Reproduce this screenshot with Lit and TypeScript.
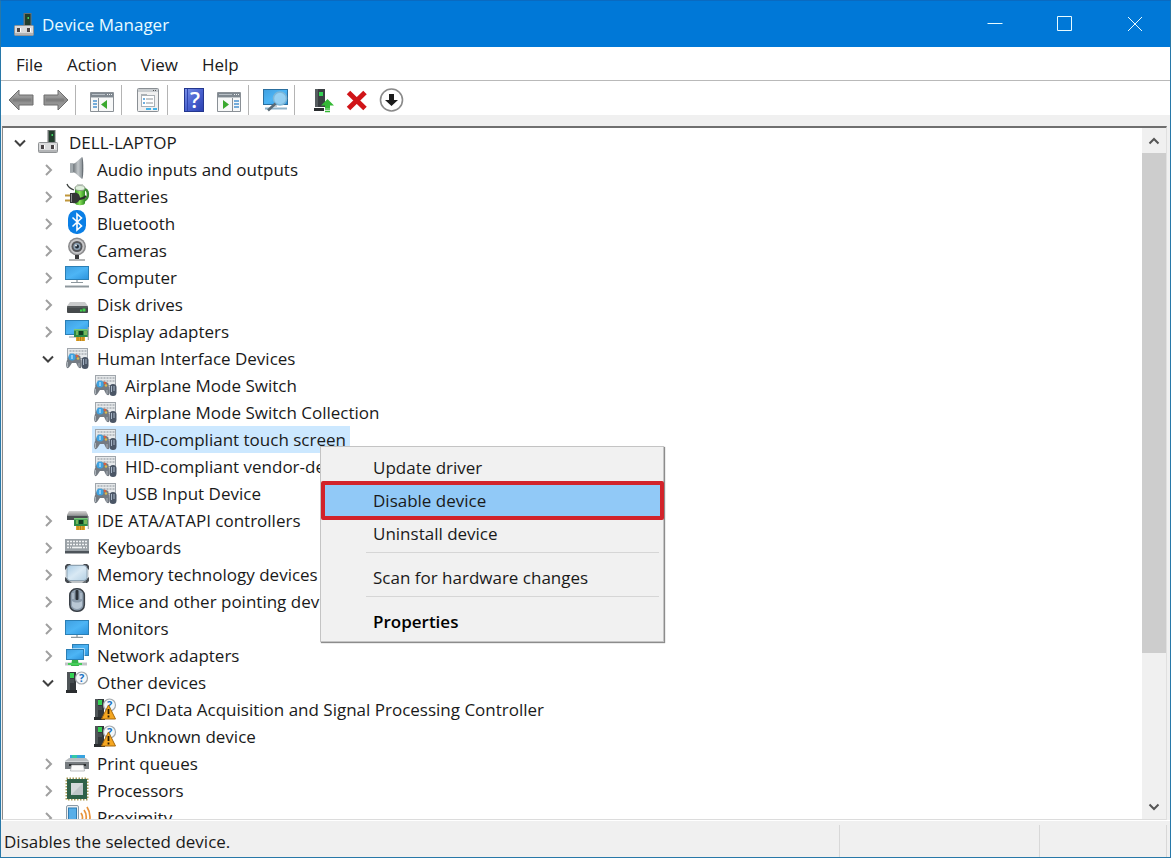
import { LitElement, html, svg, css, SVGTemplateResult } from "lit";
import { customElement, state } from "lit/decorators.js";
import { classMap } from "lit/directives/class-map.js";

interface Device {
  label: string;
  icon: string;
  level: number;
  open?: boolean;
}

const leaf = (label: string, icon: string): Device => ({ label, icon, level: 2 });
const group = (label: string, icon: string, open = false): Device => ({ label, icon, level: 1, open });

const DEVICES: Device[] = [
  { label: "DELL-LAPTOP", icon: "root", level: 0, open: true },
  group("Audio inputs and outputs", "audio"),
  group("Batteries", "battery"),
  group("Bluetooth", "bluetooth"),
  group("Cameras", "camera"),
  group("Computer", "computer"),
  group("Disk drives", "disk"),
  group("Display adapters", "display"),
  group("Human Interface Devices", "hid", true),
  leaf("Airplane Mode Switch", "hid"),
  leaf("Airplane Mode Switch Collection", "hid"),
  leaf("HID-compliant touch screen", "hid"),
  leaf("HID-compliant vendor-defined device", "hid"),
  leaf("USB Input Device", "hid"),
  group("IDE ATA/ATAPI controllers", "ide"),
  group("Keyboards", "keyboard"),
  group("Memory technology devices", "memory"),
  group("Mice and other pointing devices", "mouse"),
  group("Monitors", "monitor"),
  group("Network adapters", "network"),
  group("Other devices", "other", true),
  leaf("PCI Data Acquisition and Signal Processing Controller", "warning"),
  leaf("Unknown device", "warning"),
  group("Print queues", "printer"),
  group("Processors", "cpu"),
  group("Proximity", "proximity"),
];

const defs = svg`
  <linearGradient id="screen" x1="0" y1="0" x2="1" y2="1">
    <stop offset="0" stop-color="#3f9fe0"/><stop offset=".5" stop-color="#4db5f5"/><stop offset="1" stop-color="#2b93dd"/>
  </linearGradient>
  <linearGradient id="metal" x1="0" y1="0" x2="1" y2="0">
    <stop offset="0" stop-color="#7d8387"/><stop offset=".5" stop-color="#c3c8cb"/><stop offset="1" stop-color="#8d9499"/>
  </linearGradient>
  <linearGradient id="arrow" x1="0" y1="0" x2="0" y2="1">
    <stop offset="0" stop-color="#b4b4b4"/><stop offset=".5" stop-color="#8a8a8a"/><stop offset="1" stop-color="#a3a3a3"/>
  </linearGradient>
  <linearGradient id="help" x1="0" y1="0" x2="1" y2="1">
    <stop offset="0" stop-color="#7d93e8"/><stop offset=".5" stop-color="#4a62cf"/><stop offset="1" stop-color="#2a3fb0"/>
  </linearGradient>
  <linearGradient id="green" x1="0" y1="0" x2="1" y2="0">
    <stop offset="0" stop-color="#2e8f1f"/><stop offset=".45" stop-color="#8be35a"/><stop offset="1" stop-color="#2c8a22"/>
  </linearGradient>
  <linearGradient id="pad" x1="0" y1="0" x2="1" y2="1">
    <stop offset="0" stop-color="#a9cbe4"/><stop offset=".5" stop-color="#d9e9f4"/><stop offset="1" stop-color="#b3cfe3"/>
  </linearGradient>
  <linearGradient id="lid" x1="0" y1="0" x2="0" y2="1">
    <stop offset="0" stop-color="#d5d5d5"/><stop offset="1" stop-color="#9a9a9a"/>
  </linearGradient>`;

const tower = svg`
  <path d="M2 3h9v18H2z" fill="#33383b"/><path d="M2 3h3v18H2z" fill="#4f5558"/>
  <path d="M1 21h11v3H1z" fill="#2a2d2f"/><path d="M5 4h4v5H5z" fill="#35d254"/>
  <path d="M5 11h4M5 13h4" stroke="#596064" fill="none"/>`;

const root = svg`
  <rect x="10.500" y="1" width="8" height="13" fill="#6b706f"/><rect x="12" y="2" width="5.500" height="11" fill="#213d2c"/>
  <path d="M14.500 5h1.500v2h-1.500z" fill="#41d060"/>
  <rect x="1.500" y="13.500" width="19" height="10" rx="1" fill="#d9dadb" stroke="#8f9294"/>
  <path d="M2 22h18" stroke="#b2b4b6" stroke-width="2"/>
  <path d="M4 16h3v4H4zM14 16h3v4h-3z" fill="#4a4547"/><path d="M7.500 16v4M17.500 16v4" stroke="#fff"/>`;

const card = svg`
  <path d="M9 11h14v8H9z" fill="#2c8a46"/><path d="M9 11h14v1.500H9z" fill="#7acb7c"/>
  <rect x="14" y="13" width="4" height="4" fill="#123d22"/>
  <path d="M11 14h2M11 16h2M19 14h3M19 16h3" stroke="#bfe46f"/>
  <path d="M11 19h9v4h-9z" fill="#e2a52b"/><path d="M13 19v4M15.500 19v4M18 19v4" stroke="#9a6a12" stroke-width=".7"/>
  <path d="M23.300 9v13" stroke="#a9adb0" stroke-width="1.200"/>`;

const bubble = svg`
  <circle cx="16.500" cy="9" r="6" fill="#f4f7fa" stroke="#a3a9ad" stroke-width="1.200"/>
  <text x="16.500" y="13" text-anchor="middle" font-size="11" font-weight="700" fill="#1c73c4">?</text>`;

const ICONS: Record<string, SVGTemplateResult> = {
  root,
  audio: svg`
    <path d="M5 7.500h5v9H5z" fill="#7c8489"/><path d="M9 8 17 1v22l-8-7z" fill="url(#metal)"/>
    <path d="M5 7.500h3v9H5z" fill="#a1a8ac"/><path d="M17 1c1.800 0 1.800 22 0 22z" fill="#6b7278"/>`,
  battery: svg`
    <path d="M18 6c6-1 7 10 0 12" fill="none" stroke="#3d8a36" stroke-width="2.500"/>
    <path d="M10 5h10v15c0 3-10 3-10 0z" fill="url(#green)"/>
    <ellipse cx="15" cy="5" rx="5" ry="2.500" fill="#dff0dc" stroke="#8a9a87"/>
    <path d="M12 2.500h6V1h-6z" fill="#c9cfc8"/>
    <path d="M2 1c1 3 4 5 7 6" fill="none" stroke="#3d4240" stroke-width="1.300"/>
    <path d="M0 12.500h6M0 17.500h6" stroke="#c0963a" stroke-width="2"/>
    <path d="M5 10h3c5-1 7 2 7 5S12 21 8 20H5z" fill="#343636"/><path d="M6.500 11v8" stroke="#8b8d8d"/>
    <path d="M14 16c3 0 5-1 7-3" stroke="#2b2d2d" stroke-width="2" fill="none"/>`,
  bluetooth: svg`
    <rect x="3" y="0" width="18" height="24" rx="8.500" fill="#0a7fe6"/>
    <path d="M7.500 7.500 16.500 16 12 20V4l4.500 4-9 8.500" fill="none" stroke="#fff" stroke-width="1.600"/>`,
  camera: svg`
    <circle cx="12" cy="9.500" r="9" fill="#8b8b8d"/><circle cx="12" cy="9.500" r="7.400" fill="#c6c6c8"/>
    <circle cx="12" cy="9.500" r="5.500" fill="#55565a"/><circle cx="12" cy="9.500" r="3.600" fill="#8ba0b3"/>
    <circle cx="12" cy="9.500" r="2" fill="#1f2a36"/><circle cx="11" cy="8.500" r=".9" fill="#fff"/>
    <path d="M10 18h4v4h-4z" fill="#3a3a3c"/><path d="M4 23h16" stroke="#8d8e90" stroke-width="1.300"/>`,
  computer: svg`
    <rect x=".5" y="2.500" width="23" height="13" fill="url(#screen)" stroke="#2b7fb5"/>
    <path d="M12 16v2M6 18.500h12" stroke="#8d979d" stroke-width="1.200"/>
    <path d="M0 22.500h24" stroke="#8e979c" stroke-width="2"/><path d="M1 21.500h23" stroke="#c9cfd2"/>`,
  disk: svg`
    <path d="M5 11h15l3 4H2z" fill="#c9cacb"/><rect x="2" y="15" width="21" height="7" rx="1" fill="#45494b"/>
    <path d="M2 16h21" stroke="#686c6e"/><path d="M15 18.500h2v2h-2zM17.500 17.500h3v3h-3z" fill="#3fd14b"/>`,
  display: svg`
    <rect x=".5" y="2.500" width="23" height="14" fill="url(#screen)" stroke="#2b7fb5"/>
    <path d="M4 19h7" stroke="#8d979d"/>${card}`,
  hid: svg`
    <rect x="2.500" y="3.500" width="20" height="10" fill="#e6e9eb" stroke="#a0a6ac"/>
    <path d="M4.500 6h17M4.500 9h17M4.500 12h11" stroke="#a9afb5" stroke-width="1.400" stroke-dasharray="2 1"/>
    <path d="M4 11c3-2 8-2 11 0 1 3 2 9 1 12-3 1-4-4-5-5H7c-1 1-3 6-5 5-2-3 0-9 2-12z" fill="#747b83"/>
    <circle cx="7" cy="12" r="3.500" fill="#3fa2e0"/><path d="M6 10h2v4H6z" fill="#8fcbf0"/>
    <circle cx="12" cy="11" r="1.300" fill="#d9603f"/><circle cx="13" cy="13.500" r="1.200" fill="#dcb94a"/>
    <path d="M2.500 17v5M14 18v4" stroke="#aab1b7"/>
    <rect x="16.500" y="12" width="7" height="12" rx="3.500" fill="#4b5666"/><path d="M18.500 14v6M21 14v5" stroke="#a9b7c8"/>`,
  ide: svg`
    <path d="M4 4h17l2 4H2z" fill="url(#lid)"/><path d="M2 8h21v5H2z" fill="#4b4f51"/><path d="M2 8h21v1H2z" fill="#8c9092"/>${card}`,
  keyboard: svg`
    <path d="M0 5h24v14H0z" fill="#9aa1a6"/><path d="M0 17h24v2.500H0z" fill="#4d545a"/>
    <path d="M2 7.500h20M2 10.500h20M2 13.500h4M18 13.500h4" stroke="#f1f3f4" stroke-width="1.600" stroke-dasharray="2 1"/>
    <path d="M7 13.500h10" stroke="#f1f3f4" stroke-width="1.600"/>`,
  memory: svg`
    <rect x="0" y="3" width="24" height="19" rx="3" fill="#e3e6e8"/>
    <path d="M0 8V5l2-2h4L0 9zM24 8V5l-2-2h-4l6 6zM0 16v4l2 2h5zM24 16v4l-2 2h-5z" fill="#454a50"/>
    <rect x="2" y="4.500" width="20" height="15" rx="3" fill="url(#pad)" stroke="#8ea3b3"/>
    <path d="M4 21h17" stroke="#9aa0a4"/>`,
  mouse: svg`
    <rect x="4.800" y=".8" width="14.500" height="22.500" rx="6.500" fill="#8c9cac" stroke="#3b4148" stroke-width="1.600"/>
    <path d="M7 13c3 2 7 2 10 0v5c-2 4-8 4-10 0z" fill="#b9c7d4"/>
    <rect x="10.500" y="2" width="3" height="10" rx="1" fill="#2b3138"/>
    <path d="M8 5v6M16 5v6" stroke="#c6d1dc"/>`,
  monitor: svg`
    <rect x=".5" y="5.500" width="23" height="14" fill="url(#screen)" stroke="#2b7fb5"/>
    <path d="M12 20v2M6 22.300h12" stroke="#8d979d" stroke-width="1.300"/>`,
  network: svg`
    <rect x="7.500" y="2.500" width="16" height="11" fill="url(#screen)" stroke="#2b7fb5"/>
    <rect x="1.500" y="6.500" width="18" height="11" fill="#fff"/>
    <rect x="1.500" y="7.500" width="17" height="10" fill="url(#screen)" stroke="#2b7fb5"/>
    <path d="M0 22h22" stroke="#c0c4c6" stroke-width="3"/><path d="M7 18h6l1 6H6z" fill="#37b34a"/>
    <path d="M3 22h14" stroke="#45cf5a" stroke-width="2"/>`,
  other: svg`${tower}${bubble}`,
  warning: svg`${tower}${bubble}
    <path d="M15.500 9 22.500 23h-14z" fill="#f6a720" stroke="#a8690c" stroke-linejoin="round"/>
    <path d="M15.500 13v5M15.500 19.500v2" stroke="#2d1c02" stroke-width="1.800"/>`,
  printer: svg`
    <path d="M5 5h15v6H5z" fill="#38a3df"/><path d="M7 5h5v3H7z" fill="#35c9a4"/>
    <path d="M0 11l4-3h17l3 3z" fill="#b9bdc0"/><path d="M0 11h24v8H0z" fill="#777c80"/>
    <path d="M0 11h24v1H0z" fill="#d5d8da"/><path d="M4 14h17v2H4z" fill="#2b2e30"/>
    <path d="M6.500 15h12l1 6h-14z" fill="#fafafa" stroke="#a4a8aa" stroke-width=".7"/>`,
  cpu: svg`
    <rect x="1.500" y="1.500" width="21" height="21" fill="none" stroke="#a89a55" stroke-width="2" stroke-dasharray="1.500 1.500"/>
    <rect x="2" y="2" width="20" height="20" fill="#2f6148"/><rect x="6" y="6" width="12" height="12" fill="#d5dadb"/>
    <path d="M6 18 18 6v12z" fill="#bfc6c8"/>`,
  proximity: svg`
    <rect x="1.500" y="1.500" width="12" height="22" rx="1.500" fill="#eef1f3" stroke="#8b9aa6"/>
    <rect x="3.500" y="4" width="8" height="13" fill="#57aee8" stroke="#2f7cb3"/>
    <path d="M16 9c2 3 2 6 0 9M19 6c3 4 3 10 0 14M22 3c4 6 4 14 0 20" fill="none" stroke="#e8923a" stroke-width="1.700"/>`,
  back: svg`<path d="M0 12 10 2v5h14v10H10v5z" fill="url(#arrow)" stroke="#6d6d6d" stroke-linejoin="round"/>
    <path d="M4 12h18" stroke="#7e7e7e" stroke-width="3"/>`,
  forward: svg`<path d="M24 12 14 2v5H0v10h14v5z" fill="url(#arrow)" stroke="#6d6d6d" stroke-linejoin="round"/>
    <path d="M2 12h18" stroke="#7e7e7e" stroke-width="3"/>`,
  showTree: svg`
    <path d="M.5 4.500h23v19H.5z" fill="#f7f8f8" stroke="#8a9096"/><path d="M1 5h22v4H1z" fill="#7f8890"/>
    <path d="M2 6.500h13" stroke="#b9c0c6"/><path d="M17 6.500h5" stroke="#eef0f1" stroke-dasharray="1 1"/>
    <path d="M1 9.500h22" stroke="#c2c7ca"/><path d="M8.500 10v13" stroke="#8a9096"/>
    <path d="M3 13h4M3 16h4M3 19h4" stroke="#4b93cf" stroke-width="1.400"/><path d="M17 12v9l-6-4.500z" fill="#39a82e"/>`,
  showPane: svg`
    <path d="M.5 4.500h23v19H.5z" fill="#f7f8f8" stroke="#8a9096"/><path d="M1 5h22v4H1z" fill="#7f8890"/>
    <path d="M2 6.500h13" stroke="#b9c0c6"/><path d="M17 6.500h5" stroke="#eef0f1" stroke-dasharray="1 1"/>
    <path d="M1 9.500h22" stroke="#c2c7ca"/><path d="M15.500 10v13" stroke="#8a9096"/>
    <path d="M17 13h5M17 16h5M17 19h5" stroke="#4b93cf" stroke-width="1.400"/><path d="M6 12v9l6-4.500z" fill="#39a82e"/>`,
  properties: svg`
    <rect x="1.500" y=".5" width="21" height="23" fill="#f0f0f0" stroke="#8a8f94" rx="1"/>
    <path d="M2 2.500h20" stroke="#c9cdd0" stroke-width="3"/><path d="M17 2.500h4" stroke="#555" stroke-dasharray="1 1"/>
    <rect x="5.500" y="7.500" width="13" height="11" fill="#fff" stroke="#aab0b5"/><path d="M5 6.500h6" stroke="#aab0b5"/>
    <path d="M7 11h2M7 15h2" stroke="#3f95d6" stroke-width="1.500"/><path d="M10 11h7M10 15h7" stroke="#8d9398"/>
    <path d="M10 21h5M17 21h4" stroke="#46b4ea" stroke-width="2"/>`,
  help: svg`
    <rect x="2.500" y=".5" width="19" height="23" fill="url(#help)" stroke="#24378f"/><path d="M5.500 1v22" stroke="#2e45ae"/>
    <text x="13" y="20" text-anchor="middle" font-size="22" font-weight="600" fill="#fff">?</text>`,
  scan: svg`
    <rect x=".5" y="1.500" width="24" height="15" fill="url(#screen)" stroke="#2b6f9f"/>
    <path d="M2 20.500h22" stroke="#8fb2c8" stroke-width="2"/><path d="M10 18h4" stroke="#8d979d"/>
    <circle cx="17" cy="10.500" r="6.500" fill="#a3d6f2" fill-opacity=".85" stroke="#7db7d8" stroke-width="1.500"/>
    <path d="M12.500 15.500 5 22.500" stroke="#5a6a75" stroke-width="2.500"/>`,
  update: svg`
    <path d="M6 1h10v18H6z" fill="#3a3f42"/><path d="M6 1h3v18H6z" fill="#565c5f"/><path d="M5 20h10v3H5z" fill="#292c2e"/>
    <path d="M10 4h4v4h-4z" fill="#35d254"/>
    <path d="M18.500 11 25 17.500h-4V20h-5v-2.500h-4z" fill="#35b935"/><path d="M16 21h5M16 23.500h5" stroke="#35b935" stroke-width="1.500"/>`,
  remove: svg`<path d="M4.500 4.500 21 20.500M21 4.500 4.500 20.500" stroke="#d01418" stroke-width="5"/>`,
  disable: svg`
    <circle cx="12.500" cy="12" r="11" fill="#fff" stroke="#8a8a8a" stroke-width="1.600"/>
    <path d="M10 6h5v6h4l-6.500 6L6 12h4z" fill="#1b1b1b"/>`,
};

const icon = (name: string) => html`<svg class="icon" viewBox="0 0 24 24" aria-hidden="true">${ICONS[name]}</svg>`;

const TOOLBAR: (string[] | null)[] = [
  ["back", "Back"], ["forward", "Forward"], null,
  ["showTree", "Show/Hide Console Tree"], null,
  ["properties", "Properties"], null,
  ["help", "Help"], ["showPane", "Show/Hide Action Pane"], null,
  ["scan", "Scan for hardware changes"], null,
  ["update", "Update driver"], ["remove", "Uninstall device"], ["disable", "Disable device"],
];

const ACTIONS: (string | null)[] = [
  "Update driver", "Disable device", "Uninstall device", null, "Scan for hardware changes", null, "Properties",
];

@customElement("app-root")
export class AppRoot extends LitElement {
  @state() private selected = 11;
  @state() private active = "Disable device";
  @state() private menuAt = { x: 320, y: 446 };

  static styles = css`
    :host {
      display: block;
      height: 100vh;
      font: 17px/24px "Segoe UI", "Open Sans", "Noto Sans", sans-serif;
      color: #1a1a1a;
    }
    * { box-sizing: border-box; }
    button { font: inherit; color: inherit; background: none; border: 0; padding: 0; margin: 0; }
    .defs { position: absolute; width: 0; height: 0; }
    .window {
      height: 100%;
      display: flex;
      flex-direction: column;
      overflow: hidden;
      background: #f0f0f0;
      border: 1px solid #2878a8;
      border-top-color: #0a6ac0;
    }
    .icon { width: 24px; height: 24px; flex: none; display: block; overflow: visible; font-size: 12px; }
    .titlebar { display: flex; align-items: center; height: 46px; background: #0078d7; color: #e8fbff; padding-left: 12px; flex: none; }
    .title { flex: 1; margin: 0 0 0 5px; padding-top: 2px; font-size: 17px; font-weight: 400; }
    .caption { width: 70px; height: 46px; display: grid; place-items: center; }
    .caption svg { width: 16px; height: 16px; fill: none; stroke: #e8fbff; }
    .menubar { display: flex; height: 34px; padding-left: 3px; background: #fff; border-bottom: 1px solid #b9b9b9; flex: none; }
    .menubar button { padding: 2px 12px 0; }
    .toolbar { display: flex; height: 34px; padding: 3px 0 0 2px; align-items: center; background: #fff; flex: none; }
    .tool { width: 35px; height: 31px; display: grid; place-items: center; }
    .rule { width: 1px; height: 30px; background: #b4b4b4; margin: 0 8px 0 2px; }
    .pane {
      flex: 1;
      min-height: 0;
      display: flex;
      margin: 11px 3px 0 1px;
      background: #fff;
      border: 2px solid #6f6f6f;
      border-left: 1px solid #8a8a8a;
      border-right: 1px solid #e0e0e0;
      border-bottom: 1px solid #dcdcdc;
    }
    .tree { flex: 1; min-width: 0; margin: 0; padding: 1px 0 0; list-style: none; overflow: hidden; }
    .row { display: flex; height: 27px; }
    .level0 { padding-left: 1px; }
    .level1 { padding-left: 29px; }
    .level2 { padding-left: 57px; }
    .twist { width: 32px; height: 27px; display: grid; place-items: center; flex: none; }
    .twist svg { width: 12px; height: 12px; fill: none; stroke: #a0a0a0; stroke-width: 2; }
    .twist.open svg { stroke: #404040; }
    .item { display: flex; gap: 8px; padding: 0 4px 0 1px; white-space: nowrap; line-height: 27px; }
    .item.selected { background: #cce8ff; }
    .scrollbar { width: 24px; display: flex; flex-direction: column; background: #f0f0f0; }
    .scrollbar button { height: 25px; display: grid; place-items: center; flex: none; }
    .scrollbar svg { width: 12px; height: 12px; fill: none; stroke: #555; stroke-width: 2; }
    .track { flex: 1; }
    .thumb { background: #cdcdcd; }
    .status { display: flex; height: 37px; align-items: stretch; border-top: 1px solid #fff; flex: none; padding-right: 3px; }
    .message { flex: 1; margin: 0; padding: 9px 0 0 3px; }
    .cell { width: 200px; margin-top: 4px; border-left: 1px solid #d8d8d8; }
    .cell.last { width: 128px; border-right: 1px solid #d8d8d8; }
    .context {
      position: absolute;
      width: 344px;
      margin: 0;
      padding: 5px 0 2px;
      list-style: none;
      background: #f1f1f1;
      border: 1px solid #c4c4c4;
      box-shadow: 1px 1px 1px #8c8c8c;
    }
    .context button { position: relative; display: block; width: 100%; height: 33px; padding: 0 0 2px 52px; text-align: left; color: #1a1a1a; }
    .context button.active { background: #91c9f7; }
    .context button.active::after {
      content: "";
      position: absolute;
      inset: -4px -1px -2px 0;
      border: 4px solid #d2232a;
      border-radius: 2px;
    }
    .context .default { font-weight: 600; color: #000; }
    .divider { height: 1px; margin: 1px 4px 9px 45px; background: #d6d6d6; }
  `;

  private openMenu(event: MouseEvent, index: number) {
    event.preventDefault();
    this.selected = index;
    this.menuAt = { x: event.clientX, y: event.clientY };
  }

  private renderRow(device: Device, index: number) {
    const chevron = device.open ? "M1 3.500 6 8.500 11 3.500" : "M4 1 9 6 4 11";
    return html`
      <li class="row level${device.level}" role="treeitem" aria-level=${device.level + 1}
          aria-selected=${index === this.selected} @contextmenu=${(e: MouseEvent) => this.openMenu(e, index)}>
        ${device.open === undefined
          ? html`<span class="twist"></span>`
          : html`<button class=${classMap({ twist: true, open: device.open })} aria-label="Toggle ${device.label}">
              <svg viewBox="0 0 12 12"><path d=${chevron}></path></svg>
            </button>`}
        <span class=${classMap({ item: true, selected: index === this.selected })} @click=${() => (this.selected = index)}>
          ${icon(device.icon)}<span>${device.label}</span>
        </span>
      </li>`;
  }

  private renderContextMenu() {
    return html`
      <ul class="context" role="menu" style="left:${this.menuAt.x}px;top:${this.menuAt.y}px">
        ${ACTIONS.map((label) => label === null
          ? html`<li class="divider" role="separator"></li>`
          : html`<li role="none">
              <button role="menuitem" class=${classMap({ active: label === this.active, default: label === "Properties" })}
                      @mouseenter=${() => (this.active = label)}>${label}</button>
            </li>`)}
      </ul>`;
  }

  render() {
    return html`
      <svg class="defs" aria-hidden="true"><defs>${defs}</defs></svg>
      <div class="window">
        <header class="titlebar">
          ${icon("root")}
          <h1 class="title">Device Manager</h1>
          <button class="caption" aria-label="Minimize"><svg viewBox="0 0 16 16"><path d="M.5 7.500h15"></path></svg></button>
          <button class="caption" aria-label="Maximize"><svg viewBox="0 0 16 16"><path d="M.5.5h14v14H.5z"></path></svg></button>
          <button class="caption" aria-label="Close"><svg viewBox="0 0 16 16"><path d="M1 1l14 14M15 1 1 15"></path></svg></button>
        </header>
        <nav class="menubar">
          ${["File", "Action", "View", "Help"].map((label) => html`<button>${label}</button>`)}
        </nav>
        <div class="toolbar" role="toolbar">
          ${TOOLBAR.map((tool) => tool
            ? html`<button class="tool" aria-label=${tool[1]}>${icon(tool[0])}</button>`
            : html`<span class="rule"></span>`)}
        </div>
        <main class="pane">
          <ul class="tree" role="tree">${DEVICES.map((device, index) => this.renderRow(device, index))}</ul>
          <div class="scrollbar">
            <button aria-label="Scroll up"><svg viewBox="0 0 12 12"><path d="M1.500 8.500 6 4l4.500 4.500"></path></svg></button>
            <div class="track"><div class="thumb" style="height:78%"></div></div>
            <button aria-label="Scroll down"><svg viewBox="0 0 12 12"><path d="M1.500 3.500 6 8l4.500-4.500"></path></svg></button>
          </div>
        </main>
        <footer class="status">
          <p class="message">Disables the selected device.</p>
          <span class="cell"></span><span class="cell last"></span>
        </footer>
      </div>
      ${this.renderContextMenu()}
    `;
  }
}
